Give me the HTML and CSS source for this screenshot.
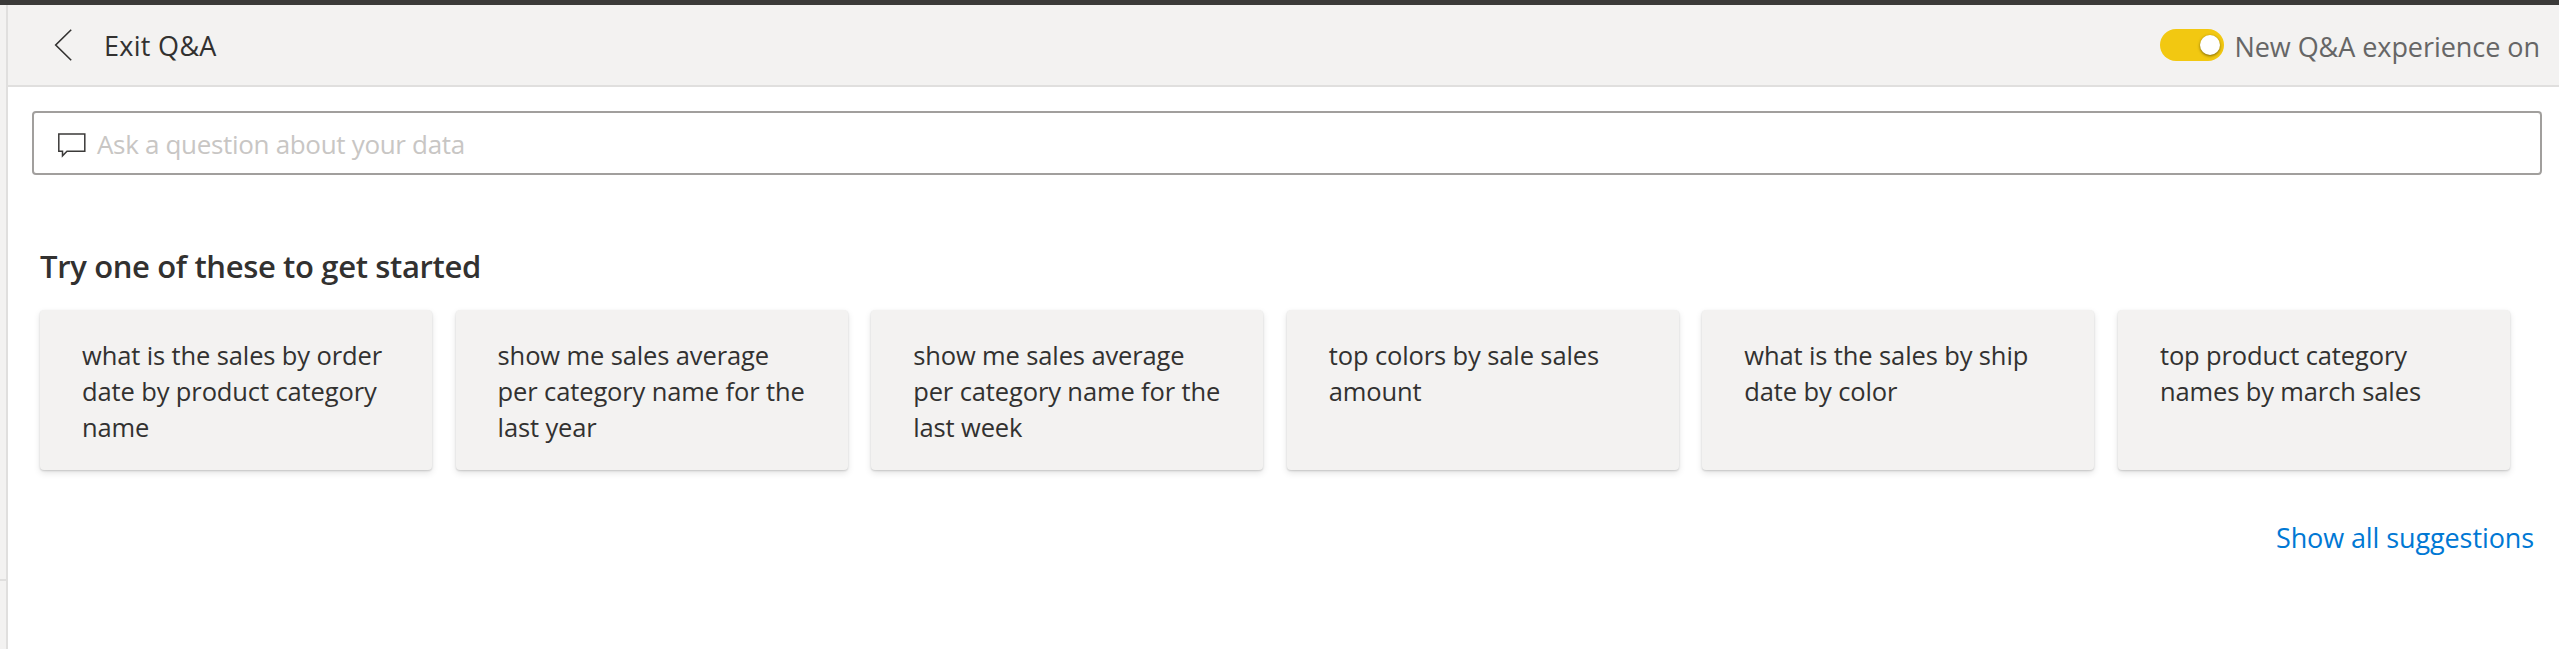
FILE: index.html
```html
<!DOCTYPE html>
<html lang="en">
<head>
<meta charset="utf-8">
<title>Q&amp;A</title>
<link rel="stylesheet" href="styles.css">
</head>
<body>
<div class="topbar"></div>
<div class="shell">
  <aside class="rail"><div class="rail-top"></div></aside>
  <main class="main">
    <header class="header">
      <button class="back" type="button">
        <svg class="back-icon" width="18" height="32" viewBox="0 0 18 32"><path d="M17.2 .8 1.7 16 17.2 31.2" fill="none" stroke="#323130" stroke-width="1.6"/></svg>
        <span class="back-label">Exit Q&amp;A</span>
      </button>
      <div class="toggle-group">
        <span class="toggle"><span class="knob"></span></span>
        <span class="toggle-label">New Q&amp;A experience on</span>
      </div>
    </header>
    <div class="ask">
      <svg class="ask-icon" width="28" height="26" viewBox="0 0 28 26"><path d="M.8 2H26.8V19.2H9L4.5 23.8V19.2H.8Z" fill="none" stroke="#3b3a39" stroke-width="1.5"/></svg>
      <span class="placeholder">Ask a question about your data</span>
    </div>
    <h2 class="title">Try one of these to get started</h2>
    <div class="cards">
      <div class="card">what is the sales by order<br>date by product category<br>name</div>
      <div class="card">show me sales average<br>per category name for the<br>last year</div>
      <div class="card">show me sales average<br>per category name for the<br>last week</div>
      <div class="card">top colors by sale sales<br>amount</div>
      <div class="card">what is the sales by ship<br>date by color</div>
      <div class="card">top product category<br>names by march sales</div>
    </div>
    <a class="show-all">Show all suggestions</a>
  </main>
</div>
</body>
</html>
```
FILE: styles.css
```css
* { box-sizing: border-box; }
body { margin: 0; height: 649px; overflow: hidden; background: #fff; color: #323130; font-family: "Open Sans", sans-serif; }
.topbar { height: 5px; background: #3b3a39; }
.shell { display: flex; height: 644px; }
.rail { width: 8px; background: #f3f2f1; border-right: 2px solid #e0dfde; }
.rail-top { height: 576px; border-bottom: 2px solid #e0dfde; }
.main { flex: 1; display: flex; flex-direction: column; }
.header { height: 82px; display: flex; justify-content: space-between; background: #f3f2f1; border-bottom: 2px solid #e0dfde; padding: 0 19px 0 46px; }
.back { display: flex; align-items: center; gap: 32px; border: 0; padding: 0; background: none; color: inherit; font: inherit; font-size: 27px; letter-spacing: .3px; }
.toggle-group { display: flex; align-items: center; gap: 10px; color: #666; font-size: 27px; letter-spacing: -.05px; }
.toggle-label { padding-top: 2px; }
.toggle { width: 64px; height: 32px; border-radius: 16px; background: #f2c811; padding: 6px 4px; display: flex; justify-content: flex-end; }
.knob { width: 20px; height: 20px; border-radius: 50%; background: #fff; box-shadow: 0 1px 3px rgba(0,0,0,.5); }
.ask { height: 64px; margin: 24px 17px 0 24px; border: 2px solid #a19f9d; border-radius: 4px; display: flex; align-items: center; padding-left: 24px; gap: 11px; font-size: 26px; letter-spacing: -.32px; color: #c8c6c4; }
.ask-icon { margin-top: 3px; }
.placeholder { padding-top: 2px; }
.title { margin: 69px 0 0 32px; font-size: 31px; line-height: 44px; font-weight: 600; letter-spacing: -.35px; }
.cards { display: grid; grid-template-columns: repeat(6, 1fr); gap: 23.5px; margin: 22px 49px 0 32px; }
.card { height: 160px; padding: 27px 0 0 42px; background: #f3f2f1; border-radius: 4px; box-shadow: 0 1px 2px rgba(0,0,0,.16), 0 3px 7px rgba(0,0,0,.11); font-size: 25.5px; line-height: 36px; letter-spacing: -.12px; white-space: nowrap; }
.show-all { align-self: flex-end; margin: 48px 25px 0 0; font-size: 27px; line-height: 40px; letter-spacing: -.1px; color: #0078d4; }
```
